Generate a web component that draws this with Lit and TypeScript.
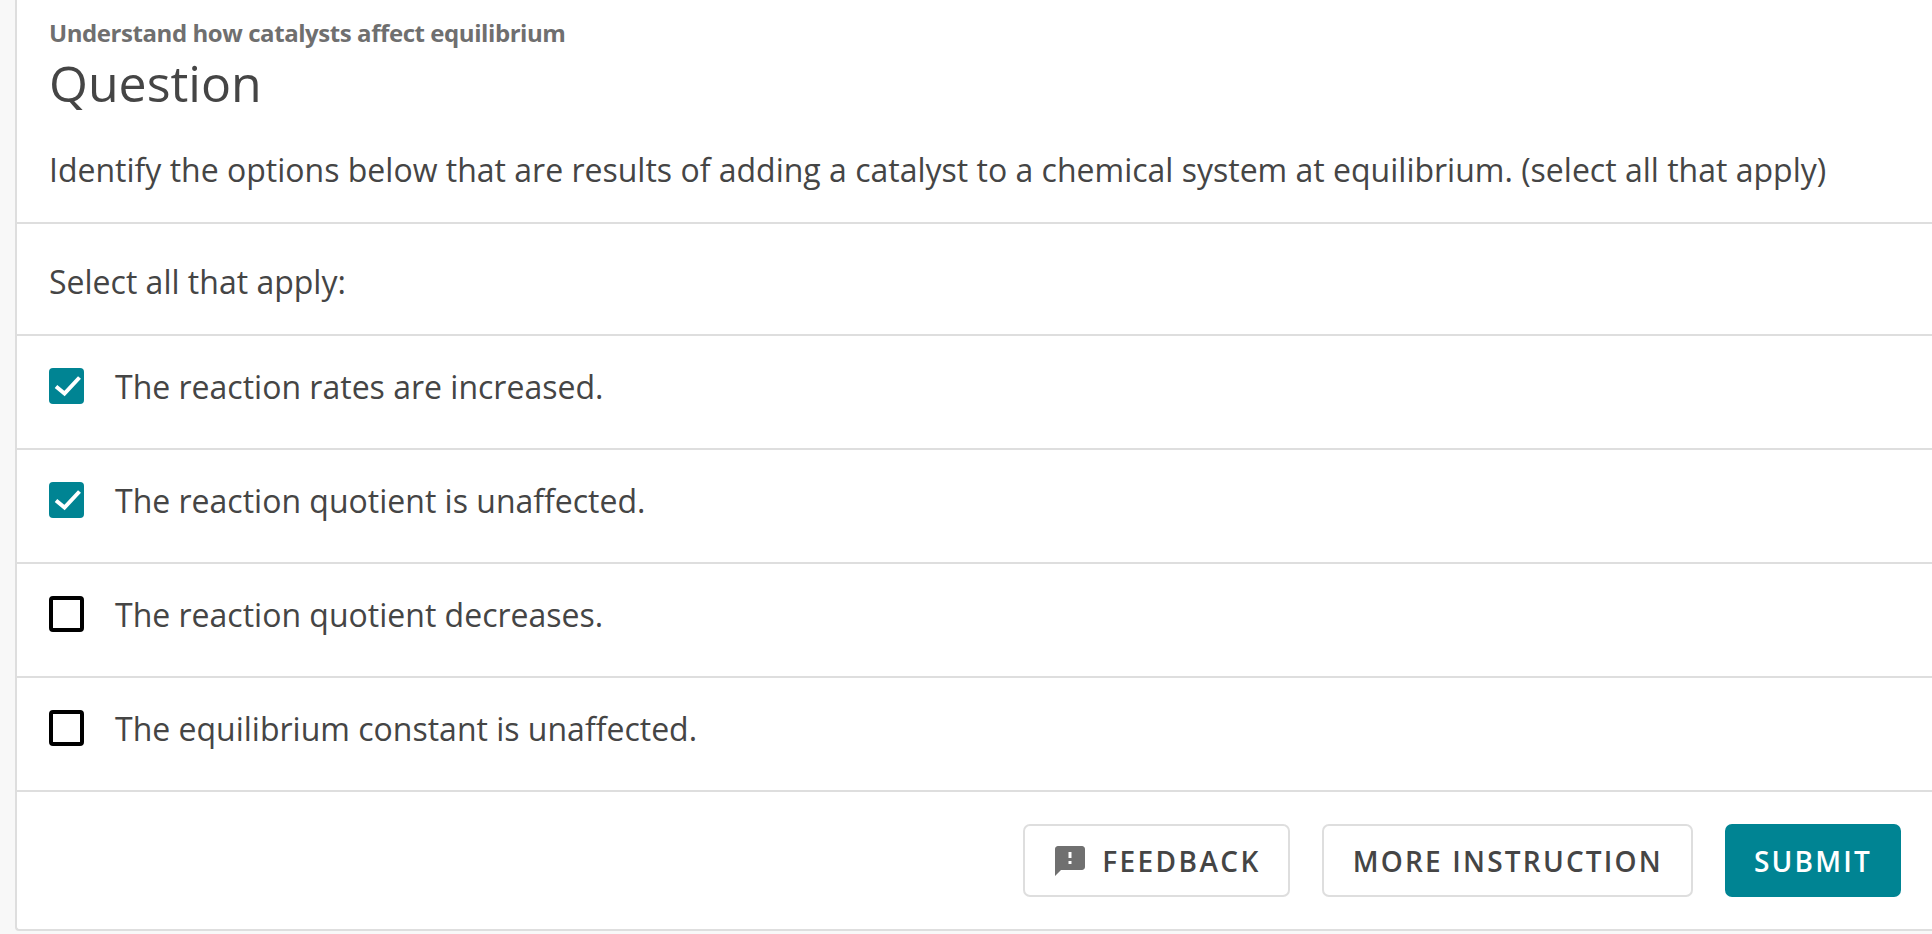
import { LitElement, html, css } from "lit";
import { customElement } from "lit/decorators.js";

const OPTIONS = [
  { text: "The reaction rates are increased.", checked: true },
  { text: "The reaction quotient is unaffected.", checked: true },
  { text: "The reaction quotient decreases.", checked: false },
  { text: "The equilibrium constant is unaffected.", checked: false },
];

@customElement("app-root")
export class AppRoot extends LitElement {
  static styles = css`
    :host {
      display: block;
      width: 1932px;
      height: 934px;
      overflow: hidden;
      background: #f8f8f8;
      font-family: "Open Sans", sans-serif;
      color: #454545;
    }
    .card {
      margin-left: 15px;
      height: 931px;
      box-sizing: border-box;
      background: #fff;
      border-left: 2px solid #dedede;
      border-bottom: 2px solid #dedede;
      border-bottom-left-radius: 4px;
      display: flex;
      flex-direction: column;
    }
    .head {
      height: 224px;
      box-sizing: border-box;
      padding: 18px 32px 0;
      border-bottom: 2px solid #dedede;
    }
    .topic { font-size: 24px; line-height: 30px; font-weight: 700; letter-spacing: -0.43px; color: #6f6f6f; }
    h1 { margin: 5px 0 0; font-size: 50px; line-height: 60px; font-weight: 400; }
    .prompt { margin: 35px 0 0; font-size: 32px; line-height: 44px; }
    .row {
      height: 114px;
      box-sizing: border-box;
      padding: 0 32px 12px;
      display: flex;
      align-items: center;
      gap: 31px;
      font-size: 32px;
      border-bottom: 2px solid #dedede;
    }
    .row.label { height: 112px; padding: 4px 32px 0; }
    .box {
      width: 35px; height: 36px; box-sizing: border-box;
      border-radius: 4px;
      border: 4px solid #000;
      flex: none;
    }
    .box.on { background: #008493; border: none; }
    .box svg { display: block; }
    .foot {
      flex: 1;
      display: flex;
      align-items: center;
      justify-content: flex-end;
      gap: 32px;
      padding-right: 31px;
    }
    .btn {
      height: 73px;
      box-sizing: border-box;
      padding: 0 28px 0 29px;
      border: 2px solid #dedede;
      border-radius: 7px;
      background: #fff;
      color: #454545;
      font: 600 28px "Open Sans", sans-serif;
      letter-spacing: 2.2px;
      display: flex;
      align-items: center;
      gap: 14px;
    }
    .btn.icon { padding: 0 27px 0 27px; letter-spacing: 2.4px; }
    .btn.primary { background: #008493; border-color: #008493; color: #fff; padding: 0 27px; }
  `;

  render() {
    return html`<div class="card">
      <div class="head">
        <div class="topic">Understand how catalysts affect equilibrium</div>
        <h1>Question</h1>
        <p class="prompt">Identify the options below that are results of adding a catalyst to a chemical system at equilibrium. (select all that apply)</p>
      </div>
      <div class="row label">Select all that apply:</div>
      ${OPTIONS.map(
        (o) => html`<div class="row">
          <span class="box ${o.checked ? "on" : ""}">
            ${o.checked
              ? html`<svg width="35" height="36" viewBox="0 0 35 36"><path d="M7 18.5l8.5 7L30.5 9.5" fill="none" stroke="#fff" stroke-width="4"/></svg>`
              : ""}
          </span>
          <span>${o.text}</span>
        </div>`
      )}
      <div class="foot">
        <button class="btn icon">
          <svg width="36" height="36" viewBox="0 0 24 24"><path fill="#707070" d="M20 2H4c-1.1 0-2 .9-2 2v18l4-4h14c1.1 0 2-.9 2-2V4c0-1.1-.9-2-2-2zm-7 12h-2v-2h2v2zm0-4h-2V6h2v4z"/></svg>
          FEEDBACK
        </button>
        <button class="btn">MORE INSTRUCTION</button>
        <button class="btn primary">SUBMIT</button>
      </div>
    </div>`;
  }
}
